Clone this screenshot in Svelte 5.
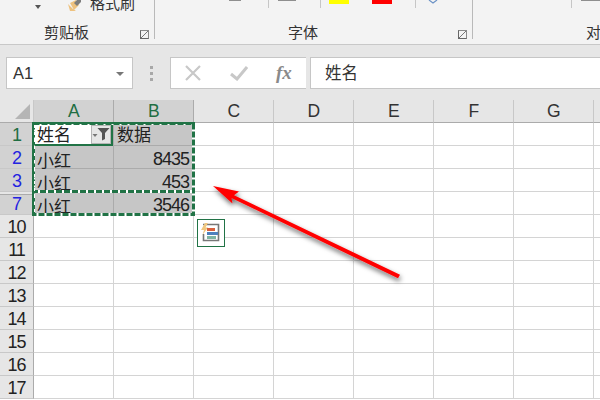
<script>
  const cols = ['A', 'B', 'C', 'D', 'E', 'F', 'G', 'H'];
  const rows = [
    { n: '1', kind: 'first', a: '姓名', b: '数据' },
    { n: '2', kind: 'sel', a: '小红', b: '8435' },
    { n: '3', kind: 'sel', a: '小红', b: '453' },
    { n: '7', kind: 'sel last', a: '小红', b: '3546' },
    ...[10, 11, 12, 13, 14, 15, 16, 17].map((n) => ({ n: String(n), kind: '', a: '', b: '' }))
  ];
</script>

<div class="page">
  <header class="ribbon">
    <div class="group clip">
      <span class="caret"></span>
      <svg class="brush" width="16" height="11" viewBox="0 0 16 11">
        <path d="M1 4 L6 9 L9 11 L3 11 Z M3 3 L9 0 L12 5 L7 10 Z" fill="#eec27f" />
        <path d="M7 3 L10 0 L14 0 L14 2 L10 6 Z" fill="#7d7d7d" />
      </svg>
      <span class="cut">格式刷</span>
      <span class="label">剪贴板</span>
      <span class="launch"></span>
    </div>
    <div class="group font">
      <i class="dash d1"></i><i class="tick t1"></i><i class="dash d2"></i>
      <i class="tick t2"></i><i class="swatch yellow"></i><i class="swatch red"></i>
      <i class="tick t3"></i>
      <svg class="aglyph" width="10" height="4" viewBox="0 0 10 4"><path d="M1 0 L5 3 L9 0" fill="none" stroke="#6d93c6" stroke-width="1.2" /></svg>
      <span class="label">字体</span>
      <span class="launch"></span>
    </div>
    <div class="group align">
      <i class="tick t4"></i><i class="dash d3"></i>
      <span class="label">对</span>
    </div>
  </header>

  <div class="fbar">
    <div class="namebox"><span>A1</span><i class="ncaret"></i></div>
    <div class="grip"><i></i><i></i><i></i></div>
    <div class="fbtns">
      <svg width="16" height="16" viewBox="0 0 16 16"><path d="M1 1 L15 15 M15 1 L1 15" stroke="#c8c8c8" stroke-width="2.2" /></svg>
      <svg width="18" height="16" viewBox="0 0 18 16"><path d="M1 9 L7 14 L17 2" fill="none" stroke="#c8c8c8" stroke-width="3" /></svg>
      <span class="fx">fx</span>
    </div>
    <div class="finput">姓名</div>
  </div>

  <div class="sheet">
    <div class="colhead">
      <div class="corner"><i></i></div>
      {#each cols as c, i}
        <div class="ch" class:on={i < 2}>{c}</div>
      {/each}
    </div>
    {#each rows as r}
      <div class="row {r.kind}">
        <div class="rh">{r.n}</div>
        <div class="cell a">
          {#if r.kind === 'first'}
            <div class="active">
              <span>{r.a}</span>
              <span class="filter">
                <svg width="18" height="15" viewBox="0 0 18 15">
                  <path d="M5.5 1 H17.5 L13 6 V12 L10 13.5 V6 Z" fill="#555" />
                  <path d="M0.5 7 H5.5 L3 10 Z" fill="#777" />
                </svg>
              </span>
            </div>
          {:else}
            <span class="txt">{r.a}</span>
          {/if}
        </div>
        <div class="cell b" class:num={r.kind !== 'first'}>{r.b}</div>
        {#each [0, 1, 2, 3, 4, 5] as k}
          <div class="cell"></div>
        {/each}
      </div>
    {/each}

    <svg class="ants" width="164" height="96" viewBox="0 0 164 96">
      <g fill="none">
        <rect x="1.5" y="1.5" width="160" height="91" stroke="#fff" stroke-width="3" />
        <rect x="1.5" y="1.5" width="160" height="91" stroke="#217346" stroke-width="3" stroke-dasharray="6 2" />
        <path d="M0 69.5 H163" stroke="#fff" stroke-width="3" />
        <path d="M0 69.5 H163" stroke="#217346" stroke-width="3" stroke-dasharray="6 2" />
        <path d="M1 0 V94 M0 1 H163" stroke="#217346" stroke-width="2" />
        <path d="M2.5 3 V93" stroke="#fff" stroke-width="1" stroke-dasharray="3 4" />
      </g>
    </svg>

    <div class="paste">
      <svg width="26" height="26" viewBox="0 0 26 26">
        <path d="M5 4.5 H20.5 V20.5 H5.5 V14" fill="none" stroke="#777" stroke-width="1.6" />
        <path d="M7 3 L3 10 H6 L4.5 15 L10 7.5 H7.5 L10 3 Z" fill="#f0c77f" />
        <rect x="9" y="8" width="8" height="3" fill="#d9603c" />
        <rect x="9" y="12" width="11" height="3" fill="#4f81bd" />
        <rect x="9" y="16" width="9" height="3" fill="#7fb5a3" />
      </svg>
    </div>
  </div>

  <svg class="arrow" width="600" height="400" viewBox="0 0 600 400">
    <defs>
      <filter id="sh" x="-10%" y="-10%" width="130%" height="130%">
        <feDropShadow dx="1" dy="3" stdDeviation="2.5" flood-color="#000" flood-opacity="0.6" />
      </filter>
    </defs>
    <path
      d="M213 186 L239 191.5 L234 195.2 L400 274.7 L398 278.3 L231.5 198 L232.5 203.5 Z"
      fill="#ff0000"
      filter="url(#sh)"
    />
  </svg>
</div>

<style>
  :global(body) { margin: 0; }
  .page {
    position: relative;
    width: 600px;
    height: 400px;
    overflow: hidden;
    background: #fff;
    font-family: "Noto Sans CJK SC", "Liberation Sans", sans-serif;
    color: #262626;
  }
  .ribbon {
    display: flex;
    box-sizing: border-box;
    height: 45px;
    background: #f3f3f3;
    border-bottom: 1px solid #c8c8c8;
    color: #333;
  }
  .group {
    position: relative;
    height: 39px;
    border-right: 1px solid #b9b9b9;
  }
  .clip { width: 154px; }
  .font { width: 317px; }
  .align { flex: 1; border-right: 0; }
  .label {
    position: absolute;
    top: 23px;
    font-size: 15px;
    line-height: 18px;
  }
  .clip .label { left: 44px; }
  .font .label { left: 133px; }
  .align .label { left: 113px; }
  .cut {
    position: absolute;
    left: 90px;
    top: -6px;
    font-size: 15px;
    line-height: 18px;
  }
  .caret {
    position: absolute;
    left: 35px;
    top: 5px;
    border: 3.5px solid transparent;
    border-top: 4px solid #555;
    border-bottom: 0;
  }
  .brush { position: absolute; left: 67px; top: 0; }
  .launch {
    position: absolute;
    right: 5px;
    top: 30px;
    width: 7px;
    height: 7px;
    border-left: 1px solid #8a8a8a;
    border-top: 1px solid #8a8a8a;
    border-right: 1px solid #666;
    border-bottom: 1px solid #666;
    background: linear-gradient(45deg, transparent 45%, #777 45%, #777 55%, transparent 55%);
    transform: scaleX(-1);
  }
  .dash { position: absolute; top: 0; height: 1px; background: #8e8e8e; }
  .d1 { left: 74px; width: 12px; }
  .d2 { left: 123px; width: 18px; }
  .d3 { left: 108px; width: 19px; }
  .tick { position: absolute; top: 0; width: 1px; height: 8px; background: #c6c6c6; }
  .t1 { left: 113px; }
  .t2 { left: 165px; }
  .t3 { left: 260px; }
  .t4 { left: 98px; }
  .swatch { position: absolute; top: 0; width: 20px; height: 4px; }
  .yellow { left: 174px; background: #ffff00; }
  .red { left: 217px; background: #ff0000; }
  .aglyph { position: absolute; left: 273px; top: 0; }

  .fbar {
    display: flex;
    align-items: flex-start;
    box-sizing: border-box;
    height: 55px;
    padding: 12px 0 0 6px;
    background: #e6e6e6;
  }
  .namebox, .fbtns, .finput {
    box-sizing: border-box;
    height: 32px;
    background: #fff;
    border: 1px solid #c6c6c6;
  }
  .namebox {
    display: flex;
    align-items: center;
    justify-content: space-between;
    width: 127px;
    padding: 0 10px 0 6px;
    font: 16.5px "Liberation Sans", sans-serif;
    color: #333;
  }
  .ncaret {
    border: 4px solid transparent;
    border-top: 4px solid #777;
    border-bottom: 0;
    margin-top: 1px;
    margin-right: -2px;
  }
  .grip {
    display: flex;
    flex-direction: column;
    gap: 3px;
    padding: 9px 0 0 0;
    margin: 0 17px 0 17px;
  }
  .grip i { width: 3px; height: 3px; background: #a8a8a8; }
  .fbtns {
    display: flex;
    align-items: center;
    gap: 29px;
    width: 136px;
    padding-left: 14px;
    border-right: 0;
  }
  .fx {
    font: italic bold 19px "Liberation Serif", serif;
    color: #8a8a8a;
    margin-left: -1px;
  }
  .finput {
    flex: 1;
    margin-left: 4px;
    padding-left: 14px;
    border-right: 0;
    font-size: 16.5px;
    line-height: 29px;
    color: #333;
  }

  .sheet { position: relative; }
  .colhead, .row {
    display: grid;
    grid-template-columns: 34px repeat(8, 80px);
    grid-template-rows: 23px;
  }
  .colhead {
    height: 23px;
    background: #e6e6e6;
    box-sizing: border-box;
  }
  .corner {
    position: relative;
    background: #e6e6e6;
    border-right: 1px solid #c8c8c8;
    border-bottom: 1px solid #ababab;
  }
  .corner i {
    position: absolute;
    right: 3px;
    bottom: 3px;
    width: 15px;
    height: 15px;
    background: #b5b5b5;
    clip-path: polygon(100% 0, 100% 100%, 0 100%);
  }
  .ch {
    box-sizing: border-box;
    border-right: 1px solid #c8c8c8;
    border-bottom: 1px solid #ababab;
    text-align: center;
    font: 17.5px/23px "Liberation Sans", sans-serif;
    letter-spacing: -0.5px;
    color: #333;
  }
  .ch.on {
    background: #d2d2d2;
    border-right-color: #ababab;
    color: #1f6e43;
  }
  .row { height: 23px; }
  .rh {
    box-sizing: border-box;
    border-right: 1px solid #ababab;
    border-bottom: 1px solid #c8c8c8;
    background: #e6e6e6;
    text-align: center;
    font: 18px/25px "Liberation Sans", sans-serif;
    letter-spacing: -1px;
    color: #222;
  }
  .cell {
    box-sizing: border-box;
    border-right: 1px solid #d4d4d4;
    border-bottom: 1px solid #d4d4d4;
    font-size: 17px;
    line-height: 22px;
    padding: 0 3px;
    color: #222;
    min-width: 0;
  }
  .txt { display: block; padding-top: 3px; }
  .cell.num {
    text-align: right;
    font: 18px/26px "Liberation Sans", sans-serif;
    letter-spacing: -1px;
    padding-right: 4px;
  }
  .first .rh, .sel .rh { background: #d2d2d2; }
  .first .rh { color: #1f6e43; }
  .sel .rh { color: #2323e0; }
  .last .rh { box-shadow: inset 0 2px 0 #e6e6e6, inset 0 3px 0 #ababab; }
  .first .a, .first .b, .sel .a, .sel .b {
    background: #c6c6c6;
    border-color: #ababab;
  }
  .first .a { padding: 0; }
  .active {
    display: flex;
    justify-content: space-between;
    box-sizing: border-box;
    height: 23px;
    padding: 1px 0 0 3px;
    background: #fff;
    border-bottom: 2px solid #217346;
    border-right: 2px solid #217346;
    line-height: 20px;
  }
  .filter {
    display: flex;
    align-items: center;
    justify-content: center;
    box-sizing: border-box;
    width: 20px;
    height: 19px;
    margin-top: 1px;
    background: #e6e6e6;
    border: 1px solid #b5b5b5;
  }
  .ants { position: absolute; left: 32px; top: 22px; }
  .paste {
    position: absolute;
    left: 197px;
    top: 119px;
    box-sizing: border-box;
    width: 28px;
    height: 28px;
    display: flex;
    align-items: center;
    justify-content: center;
    background: #fff;
    border: 1px solid #217346;
  }
  .arrow { position: absolute; left: 0; top: 0; pointer-events: none; }
</style>
